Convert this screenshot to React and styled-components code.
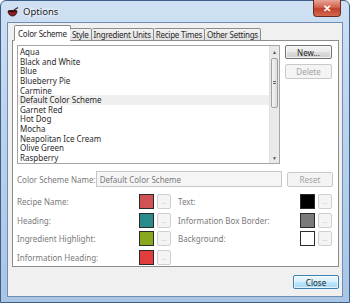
import React from 'react';
import styled, { createGlobalStyle } from 'styled-components';

const Global = createGlobalStyle`
  html, body { margin: 0; padding: 0; background: #fff; }
  body { font-family: "Noto Sans", "Open Sans", sans-serif; }
`;

const schemes = [
  'Aqua', 'Black and White', 'Blue', 'Blueberry Pie', 'Carmine',
  'Default Color Scheme', 'Garnet Red', 'Hot Dog', 'Mocha',
  'Neapolitan Ice Cream', 'Olive Green', 'Raspberry',
];

const tabs = ['Color Scheme', 'Style', 'Ingredient Units', 'Recipe Times', 'Other Settings'];

const leftColors = [
  { label: 'Recipe Name:', color: '#d05254' },
  { label: 'Heading:', color: '#2a8c8a' },
  { label: 'Ingredient Highlight:', color: '#8aa81e' },
  { label: 'Information Heading:', color: '#e23c3c' },
];

const rightColors = [
  { label: 'Text:', color: '#000000' },
  { label: 'Information Box Border:', color: '#7a7a7a' },
  { label: 'Background:', color: '#ffffff' },
];

const Window = styled.div`
  width: 350px;
  height: 303px;
  box-sizing: border-box;
  display: flex;
  flex-direction: column;
  background: linear-gradient(180deg, #cfe0f3 0%, #bcd3ec 40%, #a9c4e4 100%);
  border: 1px solid #3d5f8c;
  border-radius: 6px 6px 0 0;
  padding: 0 6px 5px 6px;
`;

const TitleBar = styled.div`
  height: 21px;
  display: flex;
  align-items: center;
  gap: 4px;
  position: relative;
`;

const Title = styled.span`
  font-size: 9.5px;
  color: #1a1a1a;
  text-shadow: 0 0 6px #fff, 0 0 3px #fff;
`;

const CloseBox = styled.div`
  position: absolute;
  right: 2px;
  top: -1px;
  width: 28px;
  height: 17px;
  border: 1px solid #6b2b22;
  border-top: none;
  border-radius: 0 0 4px 4px;
  background: linear-gradient(180deg, #e8a596 0%, #d2644e 45%, #c0402a 55%, #d36a50 100%);
  display: flex;
  align-items: center;
  justify-content: center;
  color: #fff;
  font-size: 10px;
  font-weight: bold;
  box-sizing: border-box;
`;

const Client = styled.div`
  flex: 1;
  background: #f0f0f0;
  border: 1px solid #6f8db5;
  padding: 2px 3px 0 4px;
  display: flex;
  flex-direction: column;
`;

const TabRow = styled.div`
  display: flex;
  align-items: flex-end;
  height: 16px;
  padding-left: 3px;
  margin-bottom: -1px;
  position: relative;
  z-index: 1;
`;

const Tab = styled.div`
  height: ${p => (p.$active ? '16px' : '13px')};
  box-sizing: border-box;
  padding: 0 ${p => (p.$active ? '3px' : '2px')};
  margin: 0 ${p => (p.$active ? '-1px' : '0')};
  border: 1px solid #8c8c8c;
  border-bottom: ${p => (p.$active ? '1px solid #fff' : '1px solid #8c8c8c')};
  border-left-width: ${p => (p.$active || p.$first ? '1px' : '0')};
  border-radius: 2px 2px 0 0;
  background: ${p => (p.$active ? '#fff' : 'linear-gradient(180deg, #f2f2f2, #e0e0e0)')};
  font-size: 8px;
  letter-spacing: -0.25px;
  color: #2a2a2a;
  display: flex;
  align-items: center;
  white-space: nowrap;
`;

const Panel = styled.div`
  height: 227px;
  box-sizing: border-box;
  border: 1px solid #8c8c8c;
  background: #fff;
  padding: 4px 5px 0 4px;
  display: flex;
  flex-direction: column;
`;

const TopRow = styled.div`
  display: flex;
  gap: 5px;
`;

const ListBox = styled.div`
  width: 263px;
  height: 119px;
  box-sizing: border-box;
  border: 1px solid #a6a6a6;
  display: flex;
  overflow: hidden;
`;

const Items = styled.div`
  flex: 1;
  padding-top: 1px;
`;

const Item = styled.div`
  height: 9.65px;
  line-height: 9.65px;
  font-size: 8px;
  color: #2a2a2a;
  padding-left: 2px;
  background: ${p => (p.$selected ? '#efefef' : 'transparent')};
  white-space: nowrap;
`;

const ScrollBar = styled.div`
  width: 9px;
  background: #eaeaea;
  border-left: 1px solid #e0e0e0;
  display: flex;
  flex-direction: column;
  align-items: center;
`;

const Arrow = styled.div`
  height: 11px;
  font-size: 5px;
  color: #555;
  display: flex;
  align-items: center;
`;

const Thumb = styled.div`
  width: 7px;
  height: 50px;
  margin-top: 1px;
  box-sizing: border-box;
  border: 1px solid #a0a0a0;
  border-radius: 2px;
  background: linear-gradient(90deg, #f4f4f4, #dcdcdc);
  display: flex;
  align-items: center;
  justify-content: center;
`;

const Grip = styled.div`
  width: 3px;
  height: 4px;
  background: repeating-linear-gradient(180deg, #666 0 1px, transparent 1px 2px);
`;

const Spacer = styled.div`
  flex: 1;
`;

const ButtonCol = styled.div`
  display: flex;
  flex-direction: column;
  gap: 5px;
`;

const Button = styled.div`
  width: ${p => p.$w || 47}px;
  height: ${p => p.$h || 14}px;
  box-sizing: border-box;
  border: 1px solid ${p => (p.$disabled ? '#c9c9c9' : p.$default ? '#3c7fb1' : '#707070')};
  border-radius: 2px;
  background: ${p =>
    p.$disabled
      ? '#f4f4f4'
      : p.$default
      ? 'linear-gradient(180deg, #eaf6fd 0%, #d9f0fc 50%, #bee6fd 51%, #a7d9f5 100%)'
      : 'linear-gradient(180deg, #f2f2f2 0%, #ebebeb 50%, #dddddd 51%, #cfcfcf 100%)'};
  box-shadow: inset 0 0 0 1px ${p => (p.$disabled ? '#f4f4f4' : 'rgba(255,255,255,0.7)')};
  color: ${p => (p.$disabled ? '#a3a3a3' : '#1e1e1e')};
  font-size: 8px;
  display: flex;
  align-items: center;
  justify-content: center;
`;

const NameRow = styled.div`
  display: flex;
  align-items: center;
  margin-top: 7px;
  height: 16px;
`;

const Label = styled.span`
  font-size: 8px;
  color: #7a7a7a;
  white-space: nowrap;
`;

const NameInput = styled.div`
  width: 190px;
  height: 16px;
  box-sizing: border-box;
  margin-left: auto;
  margin-right: 5px;
  border: 1px solid #c6c6c6;
  background: #f5f5f5;
  font-size: 8px;
  color: #7a7a7a;
  padding-left: 3px;
  display: flex;
  align-items: center;
`;

const ColorGrid = styled.div`
  display: grid;
  grid-template-columns: 154px 154px;
  column-gap: 7px;
  margin-top: 7px;
`;

const ColorCol = styled.div`
  display: flex;
  flex-direction: column;
  gap: 3.6px;
`;

const ColorRow = styled.div`
  display: flex;
  align-items: center;
  height: 15px;
`;

const Swatch = styled.div`
  width: 15px;
  height: 15px;
  box-sizing: border-box;
  border: 1px solid #2b2b2b;
  background: ${p => p.$color};
  margin-left: auto;
  margin-right: 3px;
`;

const Dots = styled.div`
  width: 14px;
  height: 15px;
  box-sizing: border-box;
  border: 1px solid #cfcfcf;
  border-radius: 2px;
  background: #f4f4f4;
  color: #b0b0b0;
  font-size: 6px;
  display: flex;
  align-items: flex-end;
  justify-content: center;
  padding-bottom: 3px;
  line-height: 1;
`;

const Footer = styled.div`
  display: flex;
  justify-content: flex-end;
  padding-top: 8px;
`;

function PotIcon() {
  return (
    <svg width="12" height="10" viewBox="0 0 12 10">
      <path d="M7 3 L11 0.5" stroke="#3a2a20" strokeWidth="1.2" />
      <path d="M1 4 H10 Q9.5 9 5.5 9 Q1.5 9 1 4 Z" fill="#8a1e1e" stroke="#2a1010" strokeWidth="0.8" />
      <ellipse cx="5.5" cy="4" rx="4.5" ry="1" fill="#3a0a0a" />
    </svg>
  );
}

function ColorSetting({ label, color }) {
  return (
    <ColorRow>
      <Label>{label}</Label>
      <Swatch $color={color} />
      <Dots>...</Dots>
    </ColorRow>
  );
}

export default function App() {
  return (
    <>
      <Global />
      <Window>
        <TitleBar>
          <PotIcon />
          <Title>Options</Title>
          <CloseBox>✕</CloseBox>
        </TitleBar>
        <Client>
          <TabRow>
            {tabs.map((t, i) => (
              <Tab key={t} $active={i === 0} $first={i === 0}>{t}</Tab>
            ))}
          </TabRow>
          <Panel>
            <TopRow>
              <ListBox>
                <Items>
                  {schemes.map(s => (
                    <Item key={s} $selected={s === 'Default Color Scheme'}>{s}</Item>
                  ))}
                </Items>
                <ScrollBar>
                  <Arrow>▲</Arrow>
                  <Thumb><Grip /></Thumb>
                  <Spacer />
                  <Arrow>▼</Arrow>
                </ScrollBar>
              </ListBox>
              <ButtonCol>
                <Button>New...</Button>
                <Button $disabled $h={15}>Delete</Button>
              </ButtonCol>
            </TopRow>
            <NameRow>
              <Label>Color Scheme Name:</Label>
              <NameInput>Default Color Scheme</NameInput>
              <Button $disabled $h={15}>Reset</Button>
            </NameRow>
            <ColorGrid>
              <ColorCol>
                {leftColors.map(c => <ColorSetting key={c.label} {...c} />)}
              </ColorCol>
              <ColorCol>
                {rightColors.map(c => <ColorSetting key={c.label} {...c} />)}
              </ColorCol>
            </ColorGrid>
          </Panel>
          <Footer>
            <Button $default $w={46}>Close</Button>
          </Footer>
        </Client>
      </Window>
    </>
  );
}
